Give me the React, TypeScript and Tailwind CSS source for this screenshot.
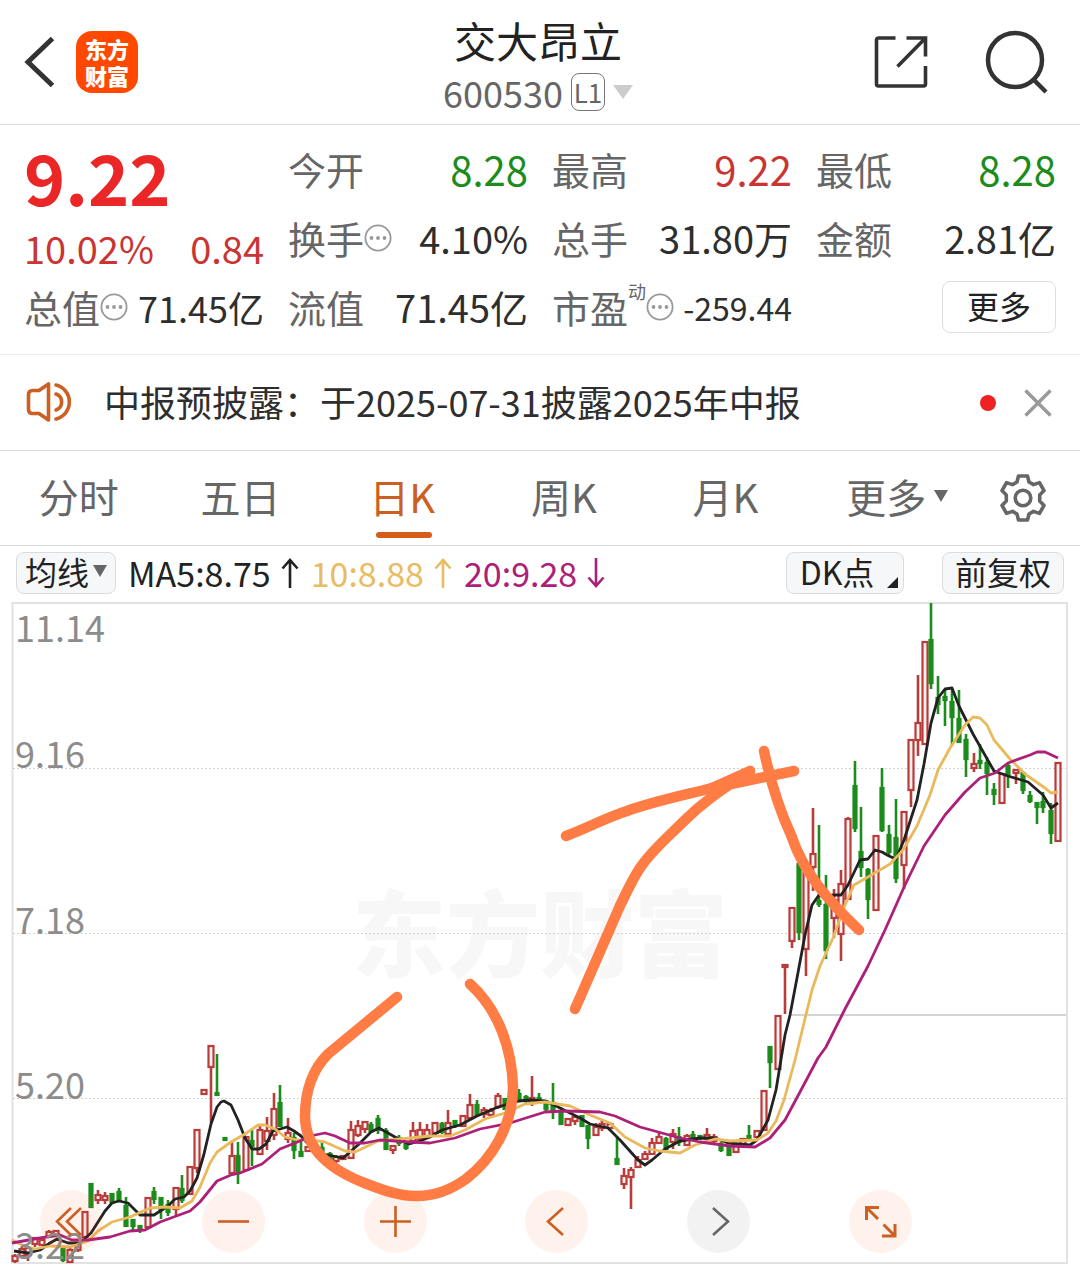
import { useState } from 'react';
import type { ReactNode } from 'react';
import clsx from 'clsx';

// x, high, low, body top, body bottom
type Bar = [number, number, number, number, number];

const RISING: Bar[] = [
  [15, 1254, 1263, 1256, 1261], [22, 1246, 1258, 1249, 1256], [28, 1247, 1261, 1248, 1255],
  [35, 1237, 1247, 1238, 1244], [42, 1238, 1246, 1240, 1245], [49, 1230, 1238, 1232, 1236],
  [56, 1230, 1237, 1231, 1236], [70, 1246, 1263, 1250, 1262], [78, 1242, 1252, 1245, 1250],
  [85, 1211, 1238, 1212, 1237], [98, 1190, 1204, 1195, 1200], [105, 1192, 1204, 1196, 1200],
  [148, 1197, 1228, 1198, 1227], [176, 1187, 1215, 1188, 1209], [190, 1166, 1195, 1167, 1194],
  [197, 1129, 1173, 1130, 1168], [204, 1089, 1095, 1090, 1094], [211, 1045, 1123, 1046, 1067],
  [232, 1141, 1174, 1156, 1173], [246, 1136, 1171, 1137, 1170], [260, 1124, 1155, 1130, 1154],
  [267, 1117, 1150, 1131, 1141], [274, 1093, 1140, 1109, 1135], [288, 1118, 1143, 1133, 1139],
  [308, 1146, 1152, 1147, 1151], [336, 1155, 1166, 1157, 1161], [343, 1155, 1160, 1156, 1159],
  [351, 1121, 1159, 1130, 1158], [358, 1120, 1137, 1126, 1135], [365, 1121, 1133, 1122, 1129],
  [393, 1145, 1154, 1146, 1150], [413, 1122, 1144, 1131, 1141], [420, 1122, 1142, 1130, 1139],
  [427, 1124, 1138, 1130, 1136], [435, 1122, 1134, 1123, 1133], [448, 1110, 1137, 1123, 1134],
  [463, 1115, 1127, 1116, 1126], [470, 1094, 1120, 1105, 1118], [484, 1107, 1118, 1110, 1114],
  [491, 1108, 1118, 1111, 1115], [498, 1093, 1109, 1096, 1107], [532, 1076, 1106, 1098, 1103],
  [568, 1118, 1126, 1119, 1125], [575, 1116, 1125, 1117, 1121], [596, 1123, 1136, 1127, 1135],
  [602, 1120, 1131, 1124, 1128], [610, 1122, 1131, 1124, 1128], [624, 1168, 1189, 1176, 1184],
  [631, 1167, 1209, 1170, 1177], [638, 1156, 1168, 1160, 1167], [645, 1151, 1160, 1154, 1159],
  [652, 1138, 1155, 1143, 1154], [659, 1133, 1144, 1137, 1143], [673, 1129, 1149, 1134, 1142],
  [687, 1134, 1146, 1136, 1145], [707, 1128, 1143, 1135, 1139], [714, 1134, 1143, 1137, 1141],
  [736, 1144, 1153, 1145, 1152], [743, 1138, 1146, 1139, 1144], [757, 1130, 1138, 1131, 1137],
  [764, 1090, 1131, 1091, 1130], [778, 1015, 1070, 1016, 1069], [785, 964, 1014, 965, 967],
  [792, 907, 948, 908, 941], [806, 870, 976, 873, 949], [813, 808, 891, 854, 867],
  [834, 889, 938, 900, 918], [841, 870, 961, 884, 934], [848, 817, 900, 819, 899],
  [876, 835, 911, 836, 910], [904, 811, 889, 812, 865], [911, 739, 807, 740, 790],
  [918, 675, 756, 723, 740], [925, 641, 745, 642, 744], [974, 753, 772, 764, 768],
  [1002, 773, 804, 774, 803], [1016, 769, 784, 770, 773], [1058, 762, 842, 763, 841],
];

const FALLING: Bar[] = [
  [63, 1246, 1262, 1247, 1260], [91, 1183, 1207, 1184, 1207], [112, 1193, 1203, 1194, 1202],
  [119, 1188, 1202, 1192, 1201], [126, 1197, 1227, 1206, 1226], [133, 1219, 1232, 1220, 1226],
  [140, 1226, 1233, 1226, 1230], [154, 1187, 1204, 1192, 1199], [161, 1197, 1219, 1198, 1210],
  [168, 1200, 1216, 1205, 1212], [182, 1175, 1203, 1189, 1200], [217, 1054, 1095, 1093, 1095],
  [225, 1138, 1139, 1138, 1140], [238, 1142, 1184, 1156, 1173], [252, 1130, 1166, 1141, 1146],
  [280, 1085, 1127, 1103, 1126], [294, 1133, 1159, 1138, 1150], [301, 1140, 1156, 1152, 1156],
  [322, 1141, 1156, 1148, 1153], [330, 1152, 1160, 1154, 1159], [371, 1122, 1133, 1125, 1131],
  [378, 1115, 1134, 1119, 1130], [386, 1128, 1150, 1131, 1149], [399, 1135, 1146, 1138, 1143],
  [406, 1141, 1150, 1143, 1148], [442, 1122, 1134, 1124, 1132], [455, 1120, 1128, 1121, 1126],
  [477, 1100, 1117, 1105, 1115], [505, 1098, 1110, 1099, 1109], [519, 1089, 1102, 1094, 1100],
  [526, 1095, 1103, 1097, 1101], [539, 1093, 1103, 1098, 1101], [546, 1100, 1111, 1101, 1109],
  [553, 1083, 1119, 1103, 1110], [561, 1107, 1125, 1113, 1124], [582, 1115, 1127, 1116, 1126],
  [588, 1125, 1149, 1126, 1138], [617, 1137, 1164, 1159, 1164], [666, 1137, 1150, 1139, 1149],
  [679, 1127, 1146, 1137, 1142], [693, 1131, 1140, 1135, 1139], [700, 1135, 1140, 1136, 1139],
  [721, 1142, 1152, 1144, 1150], [729, 1145, 1156, 1147, 1155], [749, 1125, 1139, 1136, 1138],
  [770, 1046, 1088, 1047, 1062], [799, 862, 940, 864, 932], [819, 825, 907, 901, 904],
  [826, 875, 959, 905, 950], [855, 761, 832, 786, 828], [861, 807, 877, 852, 867],
  [868, 868, 919, 870, 899], [882, 768, 832, 788, 830], [889, 825, 855, 835, 852],
  [896, 799, 883, 838, 878], [931, 603, 689, 640, 683], [938, 676, 714, 698, 704],
  [945, 690, 726, 697, 700], [952, 690, 746, 702, 717], [959, 690, 743, 719, 742],
  [966, 734, 777, 740, 759], [980, 744, 769, 761, 763], [987, 757, 795, 763, 773],
  [994, 783, 805, 790, 794], [1008, 763, 788, 766, 774], [1023, 772, 794, 773, 790],
  [1030, 791, 803, 796, 801], [1037, 802, 824, 803, 807], [1043, 792, 813, 802, 807],
  [1051, 803, 844, 811, 833],
];

const MA5 =
  '14,1251 28,1253 40,1250 50,1243 57,1239 68,1243 80,1243 91,1233 105,1211 112,1203 119,1201 128,1203 140,1215 154,1215 168,1206 175,1199 184,1197 190,1191 197,1178 204,1154 211,1124 217,1107 221,1102 224,1101 231,1105 238,1120 245,1138 252,1149 259,1149 266,1144 273,1131 280,1129 287,1127 294,1131 301,1136 310,1146 323,1154 343,1158 358,1145 371,1132 379,1128 395,1137 409,1144 420,1141 430,1137 442,1130 460,1125 477,1116 498,1107 519,1101 530,1100 545,1101 558,1107 580,1118 590,1124 608,1128 620,1140 638,1160 645,1165 652,1160 665,1149 680,1141 700,1138 715,1138 728,1143 750,1145 757,1140 768,1120 776,1090 785,1035 790,1015 797,978 805,935 812,905 819,895 828,896 834,895 841,895 848,885 860,860 868,859 875,850 882,852 889,856 896,859 904,840 917,800 924,764 931,723 938,698 945,689 952,688 959,706 973,734 994,771 1008,776 1028,782 1043,795 1051,808 1058,803';
const MA10 =
  '12,1240 22,1245 35,1249 50,1246 70,1247 88,1241 98,1231 112,1222 130,1217 150,1208 165,1207 180,1208 192,1201 200,1187 210,1163 217,1152 231,1142 245,1134 258,1125 265,1125 275,1129 285,1137 297,1140 310,1140 325,1142 345,1151 355,1152 378,1141 410,1138 430,1136 450,1136 465,1130 485,1119 505,1113 525,1104 545,1102 570,1106 590,1115 610,1123 625,1137 645,1148 660,1151 680,1153 695,1145 715,1139 730,1141 757,1140 768,1133 776,1121 784,1100 795,1060 803,1027 812,990 820,966 833,938 845,905 854,885 868,877 890,864 903,850 917,826 930,795 938,770 950,748 965,725 973,717 980,718 987,725 994,740 1010,759 1025,774 1045,788 1051,793 1058,792';
const MA20 =
  '12,1243 40,1238 60,1235 72,1240 88,1240 110,1237 130,1231 145,1230 160,1222 190,1211 200,1202 217,1181 231,1175 240,1173 262,1164 280,1149 300,1141 310,1136 325,1133 335,1136 350,1143 365,1143 380,1140 410,1142 430,1143 455,1138 480,1129 510,1123 545,1112 565,1111 600,1112 615,1116 640,1127 680,1138 700,1142 730,1146 755,1147 770,1138 785,1120 800,1092 818,1058 826,1047 845,1009 868,966 885,930 905,885 924,846 945,815 965,792 980,778 995,773 1008,763 1030,755 1037,752 1045,752 1058,758';

const AXIS = [
  { label: '11.14', y: 642 },
  { label: '9.16', y: 768 },
  { label: '7.18', y: 934 },
  { label: '5.20', y: 1099 },
  { label: '3.22', y: 1259 },
];

const TABS = ['分时', '五日', '日K', '周K', '月K'];

function InfoDots() {
  return (
    <svg className="w-7 h-7 shrink-0" viewBox="0 0 28 28" fill="none" aria-hidden="true">
      <circle cx="14" cy="14" r="12.6" stroke="#999" strokeWidth="1.8" />
      {[7.5, 14, 20.5].map((x) => (
        <circle key={x} cx={x} cy="14" r="1.9" fill="#999" />
      ))}
    </svg>
  );
}

interface QuoteItemProps {
  label: string;
  value: string;
  info?: boolean;
  sup?: string;
  valueClass?: string;
}

function QuoteItem({ label, value, info, sup, valueClass = 'text-[38px] text-[#2e2e2e]' }: QuoteItemProps) {
  return (
    <div className="flex items-center justify-between h-[69px] whitespace-nowrap">
      <dt className="flex items-center text-[38px] text-[#666]">
        {label}
        {sup && <sup className="self-start text-[18px] leading-6">{sup}</sup>}
        {info && <InfoDots />}
      </dt>
      <dd className={valueClass}>{value}</dd>
    </div>
  );
}

function MaArrow({ down }: { down?: boolean }) {
  return (
    <svg className={clsx('w-[18px] h-8 shrink-0', down && 'rotate-180')} viewBox="0 0 18 32" fill="none" stroke="currentColor" strokeWidth="2.6" aria-hidden="true">
      <path d="M9 31V3M1.5 11.5L9 3l7.5 8.5" />
    </svg>
  );
}

function Candles({ bars, rising }: { bars: Bar[]; rising?: boolean }) {
  return (
    <g stroke={rising ? '#b83c3a' : '#1c8c1c'} fill={rising ? '#fff1f0' : '#1c8c1c'} strokeWidth="2.2">
      {bars.map(([x, high, low, top, bottom]) => (
        <g key={x}>
          <path d={`M${x} ${high}V${top}M${x} ${bottom}V${low}`} strokeWidth="2.6" />
          <rect x={x - (rising ? 2.5 : 1.5)} y={top} width={rising ? 5 : 3} height={Math.max(bottom - top, 1)} />
        </g>
      ))}
    </g>
  );
}

function KLineChart() {
  return (
    <svg className="block w-full h-auto" viewBox="0 600 1080 665" fill="none" role="img" aria-label="日K">
      <text x="352" y="970" fontSize="94" fontWeight="900" fill="#f7f7f7">东方财富</text>
      <rect x="12.5" y="603" width="1054.5" height="660" stroke="#e2e2e2" strokeWidth="2" />
      {[768.5, 933.5, 1098.5].map((y) => (
        <path key={y} d={`M13 ${y}H1066`} stroke="#d0d0d0" strokeDasharray="2 2" />
      ))}
      <path d="M790 1015H1066" stroke="#d4d4d4" strokeWidth="2" />

      <Candles bars={RISING} rising />
      <Candles bars={FALLING} />

      <g strokeWidth="2.8" strokeLinejoin="round">
        <polyline points={MA5} stroke="#222" />
        <polyline points={MA10} stroke="#e9b95c" />
        <polyline points={MA20} stroke="#ad2079" />
      </g>

      {/* Hand-drawn marks */}
      <g stroke="#ff7c45" strokeWidth="10.5" strokeLinecap="round" strokeLinejoin="round">
        <path d="M397 997L328 1054C312 1070 305 1092 305 1117C306 1150 330 1170 367 1184C385 1191 400 1196 417 1196C436 1196 452 1189 466 1179C492 1159 513 1125 513 1087C512 1050 499 1010 470 984" />
        <path d="M566 836C590 827 605 818 627 811C655 801 685 795 712 788L794 771" />
        <path d="M575 1009L619 908C626 893 632 880 640 868C652 850 668 837 684 821C706 799 726 787 750 771" />
        <path d="M764 751C770 779 779 809 791 835C803 871 826 899 859 930" />
        <path d="M712 788L750 771" />
      </g>

      <g fontSize="36" fill="#8c8c8c">
        {AXIS.map(({ label, y }) => (
          <text key={label} x="15" y={y}>{label}</text>
        ))}
      </g>
    </svg>
  );
}

interface RoundButtonProps {
  label: string;
  muted?: boolean;
  children: ReactNode;
}

function RoundButton({ label, muted, children }: RoundButtonProps) {
  return (
    <button
      type="button"
      aria-label={label}
      className={clsx('w-[63px] h-[63px] rounded-full shrink-0', muted ? 'bg-black/5 text-[#666]' : 'bg-[#ff4d00]/8 text-[#cc5f22]')}
    >
      <svg viewBox="0 0 63 63" fill="none" stroke="currentColor" strokeWidth="2.6">
        {children}
      </svg>
    </button>
  );
}

export default function App() {
  const [tab, setTab] = useState('日K');

  return (
    <div className="w-full bg-white text-[#222] font-['Noto_Sans_CJK_SC',sans-serif] leading-none overflow-hidden">
      <header className="flex items-center justify-between h-[125px] border-b border-[#d9d9d9] px-6">
        <div className="flex flex-1 items-center gap-5">
          <button type="button" aria-label="返回">
            <svg className="w-8 h-[52px]" viewBox="0 0 32 52" fill="none" stroke="#333" strokeWidth="5">
              <path d="M28.5 2.5L4 26l24.5 23.5" />
            </svg>
          </button>
          <a href="#home" className="flex flex-col items-center justify-center w-[62px] h-[62px] rounded-2xl bg-[#ff4800] text-white text-[22px] leading-[27px] font-black">
            <span>东方</span>
            <span>财富</span>
          </a>
        </div>
        <div className="flex flex-col items-center pt-1 pl-1">
          <h1 className="text-[42px] leading-[56px]">交大昂立</h1>
          <button type="button" className="flex items-center gap-2 text-[36px] leading-[48px] text-[#666]">
            600530
            <span className="border border-[#777] rounded-lg w-[34px] h-[38px] text-[26px] leading-9 text-center">L1</span>
            <svg className="w-5 h-[14px]" viewBox="0 0 20 14" fill="#ccc" aria-hidden="true">
              <path d="M0 0h20L10 14z" />
            </svg>
          </button>
        </div>
        <div className="flex flex-1 items-center justify-end gap-[56px] pr-2">
          <button type="button" aria-label="分享">
            <svg className="w-[54px] h-[54px]" viewBox="0 0 54 54" fill="none" stroke="#333" strokeWidth="3.6">
              <path d="M21.5 3h-17a2 2 0 0 0-2 2v44a2 2 0 0 0 2 2h45a2 2 0 0 0 2-2V31M32.5 3h19v18.5M50.5 4l-27 27.5" />
            </svg>
          </button>
          <button type="button" aria-label="搜索">
            <svg className="w-[64px] h-[64px]" viewBox="0 0 64 64" fill="none" stroke="#333" strokeWidth="4.5">
              <circle cx="31" cy="30" r="27" />
              <path d="M49.5 49.5L62 62" />
            </svg>
          </button>
        </div>
      </header>

      <section className="border-b border-[#ebebeb] px-6 pt-[9px] pb-[13px]">
        <dl className="grid grid-cols-4 gap-x-6">
          <div className="row-span-2">
            <div className="text-[70px] leading-[84px] font-bold text-[#ea2626]">9.22</div>
            <div className="flex justify-between pt-2 text-[38px] leading-[44px] text-[#c93532]">
              <span>10.02%</span>
              <span>0.84</span>
            </div>
          </div>
          <QuoteItem label="今开" value="8.28" valueClass="text-[40px] text-[#1c8c1c]" />
          <QuoteItem label="最高" value="9.22" valueClass="text-[40px] text-[#c93532]" />
          <QuoteItem label="最低" value="8.28" valueClass="text-[40px] text-[#1c8c1c]" />
          <QuoteItem label="换手" value="4.10%" info />
          <QuoteItem label="总手" value="31.80万" />
          <QuoteItem label="金额" value="2.81亿" />
          <QuoteItem label="总值" value="71.45亿" info valueClass="text-[36px] text-[#2e2e2e]" />
          <QuoteItem label="流值" value="71.45亿" />
          <QuoteItem label="市盈" value="-259.44" sup="动" info valueClass="text-[32px] text-[#2e2e2e]" />
          <div className="flex items-center justify-end h-[69px]">
            <button type="button" className="w-[114px] h-[52px] border border-[#dcdfe2] rounded-lg pb-1 text-[32px]">
              更多
            </button>
          </div>
        </dl>
      </section>

      <div className="flex items-center h-24 border-b border-[#d9d9d9] px-6">
        <svg className="w-[52px] h-[44px] shrink-0" viewBox="0 0 52 44" fill="none" stroke="#cc5f22" strokeWidth="3.6" strokeLinejoin="round" strokeLinecap="round" aria-hidden="true">
          <path d="M24.5 3v36L15 32.5H8.5q-4 0-4-4v-15q0-4 4-4H15z" />
          <path d="M32 13a8.5 8.5 0 0 1 0 16M32 4a17.5 17.5 0 0 1 0 34" />
        </svg>
        <p className="flex-1 pl-7 pb-1 text-[36px] text-[#2e2e2e] whitespace-nowrap">中报预披露：于2025-07-31披露2025年中报</p>
        <span className="w-4 h-4 rounded-full bg-[#ee2222]" />
        <button type="button" aria-label="关闭" className="ml-7 mr-1">
          <svg className="w-7 h-7" viewBox="0 0 28 28" fill="none" stroke="#999" strokeWidth="3.4">
            <path d="M1.5 1.5l25 25M26.5 1.5l-25 25" />
          </svg>
        </button>
      </div>

      <nav className="grid grid-cols-[repeat(6,1fr)_110px] h-[95px] border-b border-[#d9d9d9] text-[40px] text-[#666]">
        {TABS.map((name) => (
          <button
            key={name}
            type="button"
            onClick={() => setTab(name)}
            className={clsx('relative pr-1 pb-1', tab === name && 'text-[#cc5f22]')}
          >
            {name}
            {tab === name && <span className="absolute bottom-[7px] left-1/2 -translate-x-1/2 w-14 h-[6px] rounded-full bg-[#d65c1c]" />}
          </button>
        ))}
        <button type="button" className="flex items-center justify-center gap-2 pl-4 pb-1">
          更多
          <svg className="w-[14px] h-3" viewBox="0 0 14 12" fill="currentColor" aria-hidden="true">
            <path d="M0 0h14L7 12z" />
          </svg>
        </button>
        <button type="button" aria-label="设置" className="flex items-center justify-center pr-1">
          <svg className="w-12 h-12" viewBox="0 0 48 48" fill="none" stroke="currentColor" strokeWidth="3.6" strokeLinejoin="round">
            <path d="M19.5 2h9l1.5 6 4.5 2.6 6-2 4.5 8-4.3 4.3v6.2l4.3 4.3-4.5 8-6-2L30 40l-1.5 6h-9L18 40l-4.500-2.6-6 2-4.5-8 4.3-4.3v-6.2L3 16.6l4.5-8 6 2L18 8z" />
            <circle cx="24" cy="24" r="7.8" />
          </svg>
        </button>
      </nav>

      <div className="flex items-center h-[54px] px-4 text-[34px] whitespace-nowrap">
        <button type="button" className="flex items-center justify-center gap-1 w-[100px] h-[42px] border border-[#d9dde0] rounded-lg bg-[#f6f7f9] pb-1 text-[32px]">
          均线
          <svg className="w-[14px] h-3" viewBox="0 0 14 12" fill="#666" aria-hidden="true">
            <path d="M0 0h14L7 12z" />
          </svg>
        </button>
        <div className="flex flex-1 items-center gap-3 pl-3">
          <span className="flex items-center gap-[10px]">MA5:8.75<MaArrow /></span>
          <span className="flex items-center gap-[10px] text-[#e9bb62]">10:8.88<MaArrow /></span>
          <span className="flex items-center gap-[10px] text-[#ad2079]">20:9.28<MaArrow down /></span>
        </div>
        <button type="button" className="relative w-[118px] h-[42px] border border-[#d9dde0] rounded-lg bg-[#f6f7f9] pr-4 pb-1 text-[32px]">
          DK点
          <svg className="absolute right-[5px] bottom-[5px] w-[11px] h-[11px]" viewBox="0 0 11 11" fill="#222" aria-hidden="true">
            <path d="M11 0v11H0z" />
          </svg>
        </button>
        <button type="button" className="ml-[38px] w-[122px] h-[42px] border border-[#d9dde0] rounded-lg bg-[#f6f7f9] pb-1 text-[32px]">
          前复权
        </button>
      </div>

      <div className="relative">
        <KLineChart />
        <div className="absolute bottom-3 left-10 right-[168px] flex justify-between">
          <RoundButton label="快退">
            <path d="M31 18L17 31.5l14 13.5M41 18L27 31.5L41 45" />
          </RoundButton>
          <RoundButton label="缩小">
            <path d="M16 31.5h31" />
          </RoundButton>
          <RoundButton label="放大">
            <path d="M16 31.5h31M31.5 16v31" />
          </RoundButton>
          <RoundButton label="左移">
            <path d="M38 18L23 31.5L38 45" />
          </RoundButton>
          <RoundButton label="右移" muted>
            <path d="M26 18L41 31.5L26 45" />
          </RoundButton>
          <RoundButton label="全屏">
            <path d="M17.5 30V17.5H30M18 18l11 11M46 34v12H33M45.5 45.5l-11-11" strokeWidth="3" />
          </RoundButton>
        </div>
      </div>
    </div>
  );
}
